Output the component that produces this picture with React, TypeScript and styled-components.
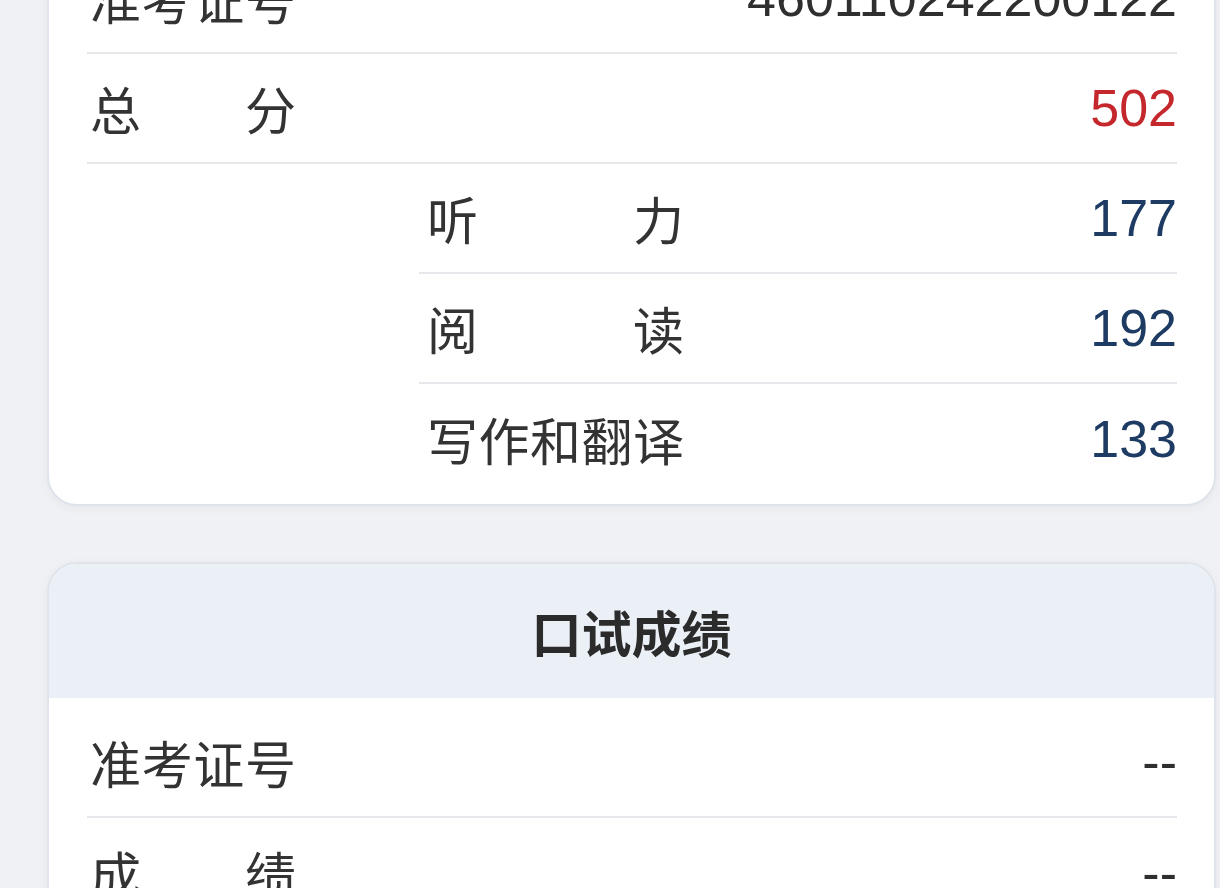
import React from "react";
import styled, { createGlobalStyle } from "styled-components";

interface ScoreRow {
  label: string;
  value: string;
  tone?: "red" | "blue" | "plain";
  sub?: boolean;
  wide?: boolean;
}

const writtenRows: ScoreRow[] = [
  { label: "准考证号", value: "460110242200122", tone: "plain" },
  { label: "总分", value: "502", tone: "red" },
  { label: "听力", value: "177", tone: "blue", sub: true },
  { label: "阅读", value: "192", tone: "blue", sub: true },
  { label: "写作和翻译", value: "133", tone: "blue", sub: true },
];

const oralRows: ScoreRow[] = [
  { label: "准考证号", value: "--", tone: "plain" },
  { label: "成绩", value: "--", tone: "plain" },
];

const GlobalStyle = createGlobalStyle`
  html, body {
    margin: 0;
    padding: 0;
    background: #f0f1f4;
    overflow: hidden;
  }
  body {
    font-family: "Liberation Sans", "Noto Sans CJK SC", sans-serif;
  }
`;

function App() {
  return (
    <>
      <GlobalStyle />
      <Page>
        <Card>
          <CardBody>
            {writtenRows.map((row, index) => (
              <Row key={index} $sub={row.sub}>
                <Label $sub={row.sub}>{row.label}</Label>
                <Value $tone={row.tone}>{row.value}</Value>
              </Row>
            ))}
          </CardBody>
        </Card>
        <Card>
          <CardHeader>口试成绩</CardHeader>
          <CardBody>
            {oralRows.map((row, index) => (
              <Row key={index}>
                <Label>{row.label}</Label>
                <Value $tone={row.tone}>{row.value}</Value>
              </Row>
            ))}
          </CardBody>
        </Card>
      </Page>
    </>
  );
}

const Page = styled.div`
  display: flex;
  flex-direction: column;
  gap: 56px;
  padding: 0 4px 0 47px;
  margin-top: -68px;
  height: 1100px;
`;

const Card = styled.div`
  background: #ffffff;
  border: 2px solid #dfe4ec;
  border-radius: 30px;
  overflow: hidden;
  box-shadow: 0 2px 10px rgba(40, 60, 100, 0.06);
`;

const CardHeader = styled.div`
  height: 134px;
  background: #ebf0f7;
  display: flex;
  align-items: center;
  justify-content: center;
  font-family: "Noto Sans CJK SC", sans-serif;
  font-weight: 700;
  font-size: 50px;
  color: #2b2b2b;
`;

const CardBody = styled.div`
  padding: 10px 37px 10px 38px;
`;

const Row = styled.div<{ $sub?: boolean }>`
  height: 110px;
  box-sizing: border-box;
  display: flex;
  align-items: center;
  justify-content: space-between;
  margin-left: ${(p) => (p.$sub ? "332px" : "0")};
  padding-left: ${(p) => (p.$sub ? "8px" : "3px")};
  border-bottom: 2px solid #e6e7ea;

  &:last-child {
    border-bottom: none;
  }
`;

const Label = styled.span<{ $sub?: boolean }>`
  display: inline-block;
  width: ${(p) => (p.$sub ? "257px" : "206px")};
  font-family: "Noto Sans CJK SC", sans-serif;
  font-size: 51px;
  color: #333333;
  text-align: justify;
  text-align-last: justify;
  white-space: nowrap;
`;

const Value = styled.span<{ $tone?: "red" | "blue" | "plain" }>`
  font-family: "Liberation Sans", Arial, sans-serif;
  font-size: 52px;
  color: ${(p) =>
    p.$tone === "red" ? "#c4272c" : p.$tone === "blue" ? "#1e3c63" : "#2f2f2f"};
`;

export default App;
